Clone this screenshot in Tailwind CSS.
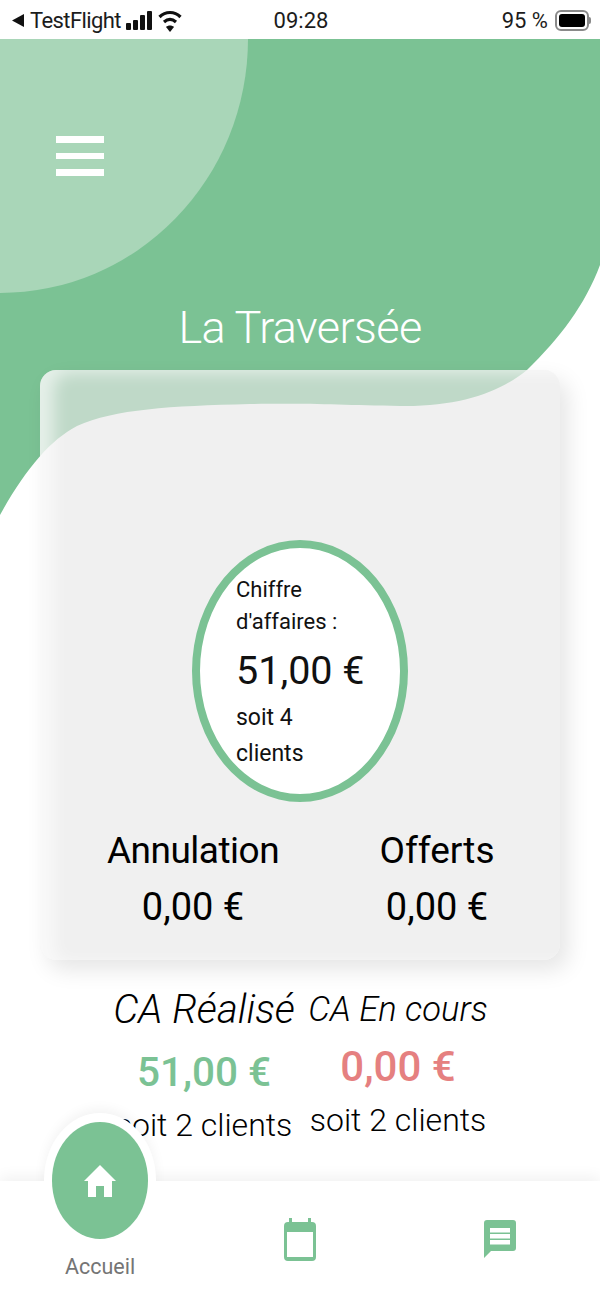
<!DOCTYPE html>
<html lang="fr">

<head>
    <meta charset="UTF-8">
    <title>La Traversée</title>
    <script src="https://cdn.jsdelivr.net/npm/@tailwindcss/browser@4"></script>
</head>

<body class="bg-white">
    <div class="relative w-[600px] h-[1298px] overflow-hidden bg-white font-['Roboto',sans-serif] text-black">
        <!-- fond vert et vague -->
        <svg class="absolute left-0 top-[39px]" width="600" height="490" viewBox="0 39 600 490">
            <path fill="#7bc294" d="M0 39H600V265C585 305 560 338 527 370C500 392 460 407 400 406C340 405 310 403 250 404C170 406 115 409 77 426C50 440 25 470 0 515Z" />
            <ellipse cx="0" cy="39" rx="248" ry="254" fill="#a9d6b8" />
        </svg>

        <!-- barre de statut -->
        <div class="relative h-[39px] flex items-center justify-between pt-[2px] pl-[11px] pr-[9px] text-[22px] text-[#1c1c1c]">
            <div class="flex items-center gap-[5px] w-[190px]">
                <svg width="14" height="15" viewBox="0 0 14 15"><path d="M13 1V14L1 7.500Z" fill="#111" /></svg>
                <span class="tracking-[-0.6px]">TestFlight</span>
                <svg width="27" height="22" viewBox="0 0 27 22">
                    <rect x="0" y="13" width="5" height="7" rx="1" fill="#111" />
                    <rect x="7" y="10" width="5" height="10" rx="1" fill="#111" />
                    <rect x="14" y="5" width="5" height="15" rx="1" fill="#111" />
                    <rect x="21" y="1" width="5" height="19" rx="1" fill="#111" />
                </svg>
                <svg width="24" height="24" viewBox="0 0 24 24" fill="none" stroke="#111" stroke-width="3.200">
                    <path d="M1.500 8C7.500 2 16.500 2 22.500 8" />
                    <path d="M6 13C10 9.500 14 9.500 18 13" />
                    <path d="M12 23L8 18C10 16 14 16 16 18Z" fill="#111" stroke="none" />
                </svg>
            </div>
            <span>09:28</span>
            <div class="flex items-center justify-end gap-[7px] w-[190px]">
                <span>95 %</span>
                <div class="flex items-center">
                    <div class="w-[34px] h-[21px] rounded-[6px] border-2 border-[#8a8a8a] p-[2px]">
                        <div class="w-full h-full rounded-[3px] bg-black"></div>
                    </div>
                    <div class="w-[2px] h-[7px] bg-[#8a8a8a] rounded-r-sm"></div>
                </div>
            </div>
        </div>

        <!-- en-tete -->
        <div class="relative h-[331px]">
            <div class="absolute left-[56px] top-[97px] w-[48px] flex flex-col gap-[10px]">
                <div class="h-[6.500px] bg-white"></div>
                <div class="h-[6.500px] bg-white"></div>
                <div class="h-[6.500px] bg-white"></div>
            </div>
            <h1 class="absolute inset-x-0 top-[259px] text-center text-white text-[45px] leading-[60px] font-light tracking-[-0.6px]">La Traversée</h1>
        </div>

        <!-- carte principale -->
        <div class="relative mx-[40px] w-[520px] h-[590px] rounded-[16px] bg-[#e7e7e7]/[.63] shadow-[inset_14px_3px_16px_rgba(255,255,255,0.6),8px_10px_22px_rgba(0,0,0,0.1)] flex flex-col items-center pt-[170px]">
            <div class="w-[216px] h-[262px] rounded-[50%] border-[8px] border-[#7bc294] bg-white pl-[36px] flex flex-col text-[#111]">
                <p class="mt-[26px] text-[22px] leading-[32px] w-[120px]">Chiffre d'affaires :</p>
                <p class="mt-[8px] text-[39.500px] leading-[50px]">51,00&nbsp;€</p>
                <p class="mt-[4px] text-[23px] leading-[36px] w-[80px]">soit 4 clients</p>
            </div>
            <div class="w-full grid grid-cols-[244px_244px] pl-[31px] mt-[21px] text-center text-[37px] leading-[56px]">
                <div>
                    <p class="tracking-[-0.5px]">Annulation</p>
                    <p class="text-[38px]">0,00 €</p>
                </div>
                <div>
                    <p>Offerts</p>
                    <p class="text-[38px]">0,00 €</p>
                </div>
            </div>
        </div>

        <!-- CA realise / en cours -->
        <div class="relative flex pl-[104px] text-center">
            <div class="w-[200px] mt-[27px]">
                <p class="text-[40px] leading-[46px] italic font-light">CA Réalisé</p>
                <p class="mt-[14px] text-[40.500px] leading-[50px] font-medium text-[#7bc294]">51,00 €</p>
                <p class="mt-[6px] text-[32px] leading-[44px] font-light">soit 2 clients</p>
            </div>
            <div class="w-[200px] ml-[-6px] mt-[27px]">
                <p class="text-[34.500px] leading-[44px] italic font-light">CA En cours</p>
                <p class="mt-[11px] text-[42px] leading-[50px] font-medium text-[#e58080]">0,00 €</p>
                <p class="mt-[6px] text-[32px] leading-[44px] font-light">soit 2 clients</p>
            </div>
        </div>

        <!-- barre de navigation -->
        <div class="absolute inset-x-0 bottom-0 h-[117px] bg-white shadow-[0_-4px_14px_rgba(0,0,0,0.06)] grid grid-cols-3">
            <div class="relative">
                <div class="absolute left-[44px] top-[-68px] w-[112px] h-[134px] rounded-[50%] bg-white shadow-[0_-4px_12px_rgba(0,0,0,0.05)]"></div>
                <div class="absolute inset-x-0 top-0 h-[70px] bg-white"></div>
                <div class="absolute left-[52px] top-[-59px] w-[96px] h-[117px] rounded-[50%] bg-[#7bc294] flex items-center justify-center">
                    <svg width="32" height="34" viewBox="0 0 32 34"><path fill="#fff" d="M16 1L32 17H28V33H20V22H12V33H4V17H0Z" /></svg>
                </div>
                <p class="absolute inset-x-0 top-[71px] text-center text-[21.500px] leading-[30px] text-[#757575]">Accueil</p>
            </div>
            <div class="flex justify-center pt-[37px]">
                <svg width="32" height="44" viewBox="0 0 32 44">
                    <path fill="#7bc294" d="M5 0H8V4H24V0H27V4H28A4 4 0 0 1 32 8V39A4 4 0 0 1 28 43H4A4 4 0 0 1 0 39V8A4 4 0 0 1 4 4H5Z" />
                    <rect x="3" y="14" width="26" height="25" fill="#fff" />
                </svg>
            </div>
            <div class="flex justify-center pt-[39px]">
                <svg width="32" height="38" viewBox="0 0 32 38">
                    <path fill="#7bc294" d="M3 0H29A3 3 0 0 1 32 3V28A3 3 0 0 1 29 31H7L0 38V3A3 3 0 0 1 3 0Z" />
                    <rect x="6" y="8" width="20" height="4.500" fill="#fff" />
                    <rect x="6" y="14" width="20" height="4.500" fill="#fff" />
                    <rect x="6" y="20" width="20" height="4.500" fill="#fff" />
                </svg>
            </div>
        </div>
    </div>
</body>

</html>
